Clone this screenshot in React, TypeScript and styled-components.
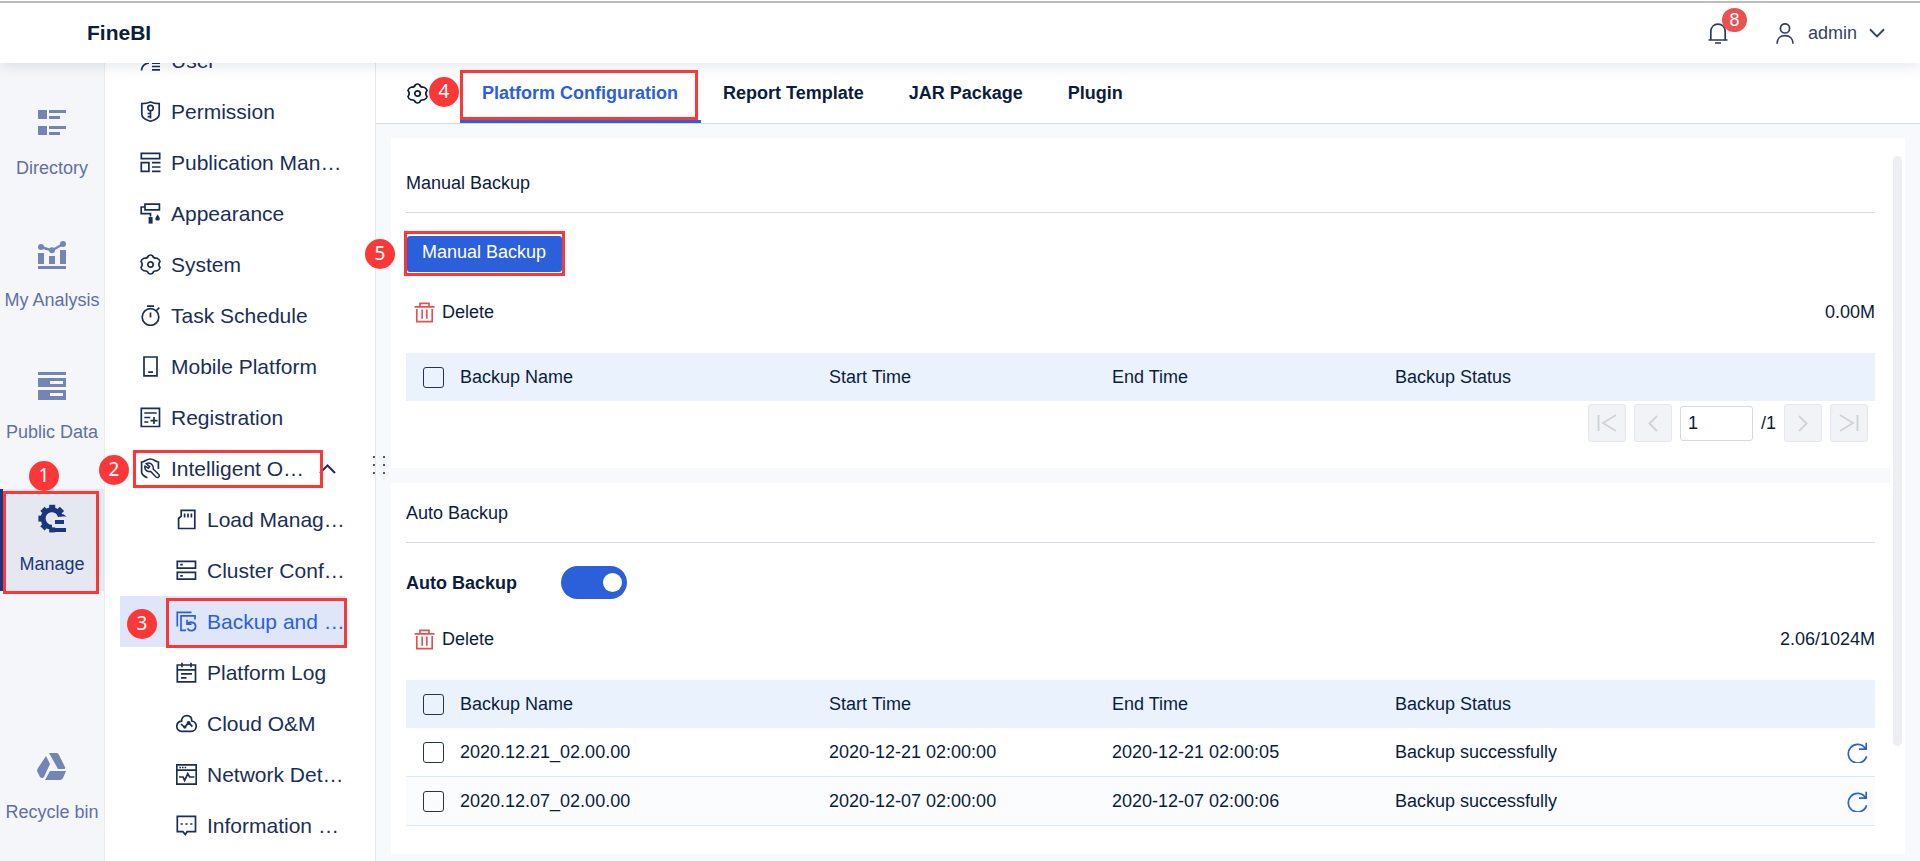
import React, { useState } from "react";
import styled, { createGlobalStyle, css } from "styled-components";

const color = {
  ink: "#0b1d3c",
  menuInk: "#1a2f57",
  blue: "#2b60da",
  rail: "#f4f6fa",
  railInk: "#5f70a5",
  railIcon: "#7385b5",
  navy: "#1b3680",
  line: "#d6d9e2",
  canvas: "#f8f9fd",
  marker: "#fb3838",
};

const GlobalStyle = createGlobalStyle`
  *, *::before, *::after { box-sizing: border-box; }
  body {
    margin: 0;
    background: ${color.canvas};
    color: ${color.ink};
    font-family: "Liberation Sans", Arial, sans-serif;
    font-size: 18px;
    line-height: 24px;
  }
  button, input { font: inherit; color: inherit; }
  a { color: inherit; text-decoration: none; }
`;

const Page = styled.div`
  position: relative;
  display: flex;
  flex-direction: column;
  min-height: 100vh;
`;

const Header = styled.header`
  position: relative;
  z-index: 2;
  display: flex;
  align-items: center;
  justify-content: space-between;
  height: 63px;
  padding: 3px 35px 0 87px;
  background: #fff;
  box-shadow: 0 2px 14px rgba(20, 35, 70, 0.12);

  &::before {
    content: "";
    position: absolute;
    top: 1px;
    left: 0;
    right: 0;
    height: 2px;
    background: #bcbebe;
  }
`;

const Brand = styled.h1`
  margin: 0;
  font-size: 21px;
`;

const HeaderTools = styled.div`
  display: flex;
  align-items: center;
  gap: 46px;
`;

const PlainButton = styled.button`
  display: flex;
  align-items: center;
  padding: 0;
  border: 0;
  background: none;
  cursor: pointer;
`;

const BellButton = styled(PlainButton)`
  position: relative;
  color: #2a3b5b;
`;

const Count = styled.span`
  position: absolute;
  top: -15px;
  left: 14px;
  width: 25px;
  height: 24px;
  border-radius: 12px;
  background: #e85252;
  color: #fff;
  text-align: center;
`;

const UserButton = styled(PlainButton)`
  color: #33435f;
  gap: 12px;
`;

const Body = styled.div`
  display: flex;
  flex: 1;
`;

const Rail = styled.nav`
  display: flex;
  flex-direction: column;
  gap: 30px;
  width: 105px;
  flex: none;
  padding: 30px 0 22px;
  background: ${color.rail};
  border-right: 1px solid #e9ecf1;
`;

const RailLink = styled.a<{ $active?: boolean; $last?: boolean }>`
  display: flex;
  flex-direction: column;
  align-items: center;
  height: 102px;
  padding-top: 15px;
  gap: 20px;
  color: ${color.railInk};
  white-space: nowrap;

  svg { color: ${color.railIcon}; }

  ${(p) => p.$last && css`margin-top: auto;`}
  ${(p) =>
    p.$active &&
    css`
      background: #e5e8f1;
      box-shadow: inset 3px 0 ${color.navy};
      color: ${color.navy};
      svg { color: ${color.navy}; }
    `}
`;

const Menu = styled.nav`
  width: 271px;
  flex: none;
  padding: 0 30px 0 15px;
  overflow: hidden;
  background: #fff;
  border-right: 1px solid #e6e8ee;
`;

const MenuList = styled.div`
  margin-top: -28px;
`;

const MenuLink = styled.a<{ $sub?: boolean; $active?: boolean }>`
  display: flex;
  align-items: center;
  gap: 10px;
  height: 51px;
  padding-left: ${(p) => (p.$sub ? 56 : 20)}px;
  font-size: 21px;
  white-space: nowrap;
  color: ${(p) => (p.$active ? color.blue : color.menuInk)};
  background: ${(p) => (p.$active ? "#e0e6fa" : "transparent")};
`;

const Caret = styled.svg`
  margin-left: auto;
  margin-right: 9px;
`;

const Main = styled.main`
  position: relative;
  display: flex;
  flex-direction: column;
  flex: 1;
  min-width: 0;
`;

const Handle = styled.svg`
  position: absolute;
  top: 392px;
  left: -4px;
`;

const TabBar = styled.div`
  display: flex;
  align-items: center;
  height: 61px;
  padding-left: 31px;
  background: #fff;
  border-bottom: 1px solid ${color.line};
`;

const GearButton = styled(PlainButton)`
  width: 53px;
`;

const Tab = styled.button<{ $active?: boolean }>`
  height: 60px;
  padding: 2px 23px 0 22px;
  border: 0;
  border-bottom: 3px solid ${(p) => (p.$active ? color.blue : "transparent")};
  background: none;
  font-weight: bold;
  color: ${(p) => (p.$active ? color.blue : color.ink)};
  cursor: pointer;
`;

const Canvas = styled.div`
  display: flex;
  flex: 1;
  padding: 14px 15px 7px;
`;

const Panel = styled.div`
  display: flex;
  flex: 1;
  min-width: 0;
  background: #fff;
`;

const Sections = styled.div`
  flex: 1;
  min-width: 0;
  padding-top: 15px;
`;

const ScrollTrack = styled.div`
  width: 15px;
  padding: 18px 3px;
`;

const ScrollThumb = styled.div`
  height: 590px;
  border-radius: 5px;
  background: #edeef2;
`;

const Section = styled.section`
  padding: 0 15px 26px;

  & + & { border-top: 15px solid ${color.canvas}; }
`;

const SectionTitle = styled.h2`
  height: 60px;
  margin: 0 0 23px;
  padding: 18px 0 17px;
  border-bottom: 1px solid ${color.line};
  font-size: 18px;
  font-weight: normal;
`;

const PrimaryButton = styled.button`
  display: block;
  height: 36px;
  margin-left: 1px;
  padding: 0 16px 4px 15px;
  border: 0;
  border-radius: 3px;
  background: ${color.blue};
  color: #fff;
  cursor: pointer;
`;

const SwitchRow = styled.label`
  display: flex;
  align-items: center;
  gap: 44px;
  height: 33px;
  font-weight: bold;
`;

const Switch = styled.input`
  appearance: none;
  width: 66px;
  height: 33px;
  margin: 0;
  padding: 7px 5px;
  border-radius: 17px;
  background: #b8c0d0;
  cursor: pointer;

  &::before {
    content: "";
    display: block;
    width: 19px;
    height: 19px;
    border-radius: 50%;
    background: #fff;
  }
  &:checked { background: ${color.blue}; }
  &:checked::before { margin-left: auto; }
`;

const Toolbar = styled.div`
  display: flex;
  align-items: center;
  justify-content: space-between;
  height: 40px;
  margin: 20px 0 21px;
`;

const DeleteButton = styled(PlainButton)`
  gap: 7px;
  padding-left: 8px;

  svg { color: #e35252; }
`;

const Table = styled.table`
  width: 100%;
  table-layout: fixed;
  border-collapse: separate;
  border-spacing: 0;
  text-align: left;

  th, td { padding: 0; font-weight: normal; }
  th { height: 48px; background: #eaf2fe; }
  td { height: 49px; border-bottom: 1px solid #dbe8fa; }
  tbody tr:nth-child(even) { background: #fbfcfe; }
`;

const CheckCol = styled.col`width: 54px;`;
const NameCol = styled.col`width: 369px;`;
const TimeCol = styled.col`width: 283px;`;

const Checkbox = styled.input`
  appearance: none;
  display: block;
  width: 21px;
  height: 21px;
  margin: 0 0 0 17px;
  border: 1px solid #26344f;
  border-radius: 3px;
  cursor: pointer;

  &:checked { background: ${color.blue}; }
`;

const StatusCell = styled.div`
  display: flex;
  align-items: center;
  justify-content: space-between;
  padding-right: 7px;

  svg { color: ${color.blue}; }
`;

const Pager = styled.div`
  display: flex;
  align-items: center;
  justify-content: flex-end;
  gap: 8px;
  padding: 3px 7px 0 0;
`;

const PageButton = styled.button`
  display: flex;
  align-items: center;
  justify-content: center;
  width: 38px;
  height: 38px;
  padding: 0;
  border: 1px solid #e5e7ec;
  border-radius: 3px;
  background: #f2f3f7;
  color: #d0d4db;
`;

const PageInput = styled.input`
  width: 73px;
  height: 35px;
  padding: 0 7px;
  border: 1px solid ${color.line};
  border-radius: 3px;
  background: #fff;
`;

/* Numbered walkthrough markers that lie over the page. */
const MarkerBox = styled.div<{ $x: number; $y: number; $w: number; $h: number }>`
  position: absolute;
  z-index: 3;
  left: ${(p) => p.$x}px;
  top: ${(p) => p.$y}px;
  width: ${(p) => p.$w}px;
  height: ${(p) => p.$h}px;
  border: 3px solid ${color.marker};
  pointer-events: none;
`;

const MarkerDot = styled.span<{ $x: number; $y: number }>`
  position: absolute;
  z-index: 4;
  left: ${(p) => p.$x}px;
  top: ${(p) => p.$y}px;
  width: 30px;
  height: 30px;
  border-radius: 50%;
  background: ${color.marker};
  color: #fff;
  font-family: "Noto Sans", sans-serif;
  font-size: 19px;
  line-height: 29px;
  text-align: center;
  pointer-events: none;
`;

const Outline = ({ size = 21, children }: { size?: number; children: React.ReactNode }) => (
  <svg width={size} height={size} viewBox="0 0 21 21" fill="none" stroke="currentColor" strokeWidth="1.7" aria-hidden="true">
    {children}
  </svg>
);

const Solid = ({ children }: { children: React.ReactNode }) => (
  <svg width="30" height="28" viewBox="0 0 30 28" fill="currentColor" overflow="visible" aria-hidden="true">
    {children}
  </svg>
);

const gear = (
  <>
    <path d="M8.6 1.6 Q10.5 0.4 12.4 1.6 Q13.6 4.6 17 4.2 Q19.4 5 20 7.4 Q17.6 10.5 20 13.6 Q19.4 16 17 16.8 Q13.6 16.4 12.4 19.4 Q10.5 20.6 8.6 19.4 Q7.4 16.4 4 16.8 Q1.6 16 1 13.6 Q3.4 10.5 1 7.4 Q1.6 5 4 4.2 Q7.4 4.6 8.6 1.6 Z" />
    <circle cx="10.5" cy="10.5" r="2.7" />
  </>
);

const icons = {
  user: (
    <>
      <circle cx="8.5" cy="6" r="4" />
      <path d="M1.5 20.5 C2 16 4 13.5 9 13 M12 13.2 h8 M12 16.5 h8 M12 19.8 h8" />
    </>
  ),
  permission: (
    <>
      <path d="M10.5 1 C7.5 2.3 4.8 2.6 1.8 2.6 V13 C1.8 17 6 19 10.5 20.2 C15 19 19.2 17 19.2 13 V2.6 C16.2 2.6 13.5 2.3 10.5 1 Z" />
      <circle cx="10.5" cy="7" r="2.7" />
      <path d="M10.5 9.7 V17.5 M10.5 12.5 H7.6 M10.5 15.6 H7.6" />
    </>
  ),
  publication: (
    <path d="M1.3 1.3 h18.4 v5.4 h-18.4 z M1.3 10.7 h7.6 v8.6 h-7.6 z M12 10.7 h8.5 M12 15 h8.5 M12 19.3 h8.5" />
  ),
  appearance: (
    <>
      <path d="M5 1.2 h14.4 v5.6 h-14.4 z M5 4 H1.2 V10.6 H10.5 V13.5" />
      <path d="M8.6 14 h4 v6.6 h-4 z" fill="currentColor" stroke="none" />
      <path d="M17.6 11.6 c-3.4 4.2 -2.6 6 0 6 s3.4 -1.8 0 -6 z" fill="currentColor" stroke="none" />
    </>
  ),
  system: gear,
  schedule: (
    <>
      <circle cx="10.5" cy="12" r="8.3" />
      <path d="M7 1.2 h7 M10.5 7.5 v5 M16.5 5.5 l2.8 -2.8" />
    </>
  ),
  mobile: <path d="M4 1 h13 v18.8 h-13 z M8.2 16.2 h4.8" />,
  registration: <path d="M1.3 1.3 h18.2 v18.2 h-18.2 z M4.3 6 h12.4 M4.3 10.5 h6 M4.3 15 h4 M10.5 13.6 h7 M14 10 v7" />,
  intelligent: (
    <>
      <path d="M18.4 11 V4 C15 3.6 14 1 10.2 1 C6.4 1 5.4 3.6 1.6 4 V14 C1.6 17 4.2 18.4 7.4 19.8" />
      <path d="M6.3 5.6 L9.6 8.6 L8.4 10.2 L5 8.2 C4 11.5 7 14.4 10.6 13.4 L16 19 C18 20.6 20.2 18.2 18.8 16.4 L13.2 11 C14 7 10 4 6.3 5.6 Z" strokeWidth="1.5" />
    </>
  ),
  load: <path d="M6 1.3 H18.8 V19.5 H2.6 V9.5 L5.2 7.2 V1.3 H7 M8.6 4.5 v4 M12 4.5 v4 M15.4 4.5 v4" />,
  cluster: <path d="M1.3 1.3 h18.2 v6.8 h-18.2 z M1.3 12.4 h18.2 v6.8 h-18.2 z M4.2 4.7 h2.6 M4.2 15.8 h2.6" />,
  backup: (
    <>
      <path d="M1.3 15.5 V1.3 H15.5" />
      <path d="M10 19.4 H5 V4.8 H19 V8.4" />
      <path d="M11 8.8 V13.2 H15.6 M11.4 13 C13 10.2 19.8 10.6 19.6 15.4 C19.4 20.4 13 20.8 11.4 17.4" />
    </>
  ),
  log: <path d="M1.3 3 h18.2 v16.8 h-18.2 z M1.3 7.8 h18.2 M6 0.8 v4.4 M15 0.8 v4.4 M5 11.8 h11 M5 15.8 h5.5" />,
  cloud: (
    <>
      <path d="M5.6 8.2 C5.6 4.8 7.8 2.6 10.8 2.6 C13.8 2.6 15.8 4.8 15.8 8 C18.6 8.6 20.2 10.8 20.2 13 C20.2 16.2 18 18.4 15 18.4 H5.8 C2.8 18.4 0.8 16.2 0.8 13.4 C0.8 10.8 2.6 8.6 5.6 8.2 Z" />
      <path d="M5 11.2 L8.8 14.4 L12.6 9.6 L16.4 13.6" />
      <circle cx="8.8" cy="14" r="1.6" fill="currentColor" stroke="none" />
      <circle cx="12.6" cy="10" r="2" fill="currentColor" stroke="none" />
    </>
  ),
  network: <path d="M0.8 0.8 h19.4 v19.4 h-19.4 z M0.8 6.2 h19.4 M3.4 3.5 h1.6 M6 3.5 h1.6 M8.6 3.5 h1.6 M3 13 h4 l1.6 3.4 l3.2 -6.8 l1.8 3.4 h4.8" />,
  information: <path d="M1.3 1.3 h18.2 v15.4 h-8.4 l-1.8 2.8 l-2.4 -2.8 h-5.6 z M4.6 9 h2.2 M9.4 9 h2.2 M14.2 9 h2.2" />,
};

type MenuEntry = { label: string; icon: keyof typeof icons; sub?: boolean; open?: boolean; active?: boolean };

const menu: MenuEntry[] = [
  { label: "User", icon: "user" },
  { label: "Permission", icon: "permission" },
  { label: "Publication Man…", icon: "publication" },
  { label: "Appearance", icon: "appearance" },
  { label: "System", icon: "system" },
  { label: "Task Schedule", icon: "schedule" },
  { label: "Mobile Platform", icon: "mobile" },
  { label: "Registration", icon: "registration" },
  { label: "Intelligent O…", icon: "intelligent", open: true },
  { label: "Load Manag…", icon: "load", sub: true },
  { label: "Cluster Conf…", icon: "cluster", sub: true },
  { label: "Backup and …", icon: "backup", sub: true, active: true },
  { label: "Platform Log", icon: "log", sub: true },
  { label: "Cloud O&M", icon: "cloud", sub: true },
  { label: "Network Det…", icon: "network", sub: true },
  { label: "Information …", icon: "information", sub: true },
];

const rail = [
  {
    label: "Directory",
    icon: <path d="M1 2h9v9H1zM1 18h9v9H1zM12 2h17v3H12zM12 8h11v3H12zM12 18h17v3H12zM12 24h11v3H12z" />,
  },
  {
    label: "My Analysis",
    icon: (
      <>
        <path d="M1 13h6v11H1zM12 16h6v8h-6zM23 10h6v14h-6zM1 26h28v3H1z" />
        <path d="M4 7 L15 10.5 L26 4" fill="none" stroke="currentColor" strokeWidth="2.4" />
        <circle cx="4" cy="7" r="3" />
        <circle cx="15" cy="10.2" r="3" />
        <circle cx="26" cy="4" r="3" />
      </>
    ),
  },
  {
    label: "Public Data",
    icon: <path fillRule="evenodd" d="M1 0h28v3H1zM1 6h28v9H1zM13 9v3h13V9zM1 18h28v10H1zM13 21v3h13v-3z" />,
  },
  {
    label: "Manage",
    active: true,
    icon: (
      <>
        <path d="M23.5 12.5 A8.8 8.8 0 1 0 15 23.3" fill="none" stroke="currentColor" strokeWidth="5" />
        <path d="M20 12.5 L26 10 L29.5 12.5 Z" />
        <g>
          {[90, 135, 180, 225, 270, 315].map((angle) => (
            <rect key={angle} x="24" y="11.6" width="5" height="6" transform={`rotate(${angle} 15.2 14.6)`} />
          ))}
        </g>
        <path d="M18 16h9v4h-9zM18 24h11v4H18z" />
      </>
    ),
  },
  {
    label: "Recycle bin",
    last: true,
    icon: <path d="M12 1h8q1 0 2 2l6 12q1 2-1 2h-6zM9 4l4 8-6 13q-2 2-4 0l-3-6q0-1 1-3zM13 19h16l-3 7q-1 2-3 2H8z" />,
  },
];

const tabs = ["Platform Configuration", "Report Template", "JAR Package", "Plugin"];

const backups = [
  { name: "2020.12.21_02.00.00", start: "2020-12-21 02:00:00", end: "2020-12-21 02:00:05" },
  { name: "2020.12.07_02.00.00", start: "2020-12-07 02:00:00", end: "2020-12-07 02:00:06" },
];

const DeleteBar = ({ usage }: { usage: string }) => (
  <Toolbar>
    <DeleteButton type="button">
      <Outline>
        <path d="M6 4.4 V1.4 H15 V4.4 M0.5 4.8 H20.5 M2.8 7 V19.6 H18.2 V7 M8.2 7.5 V16.8 M12.8 7.5 V16.8" />
      </Outline>
      Delete
    </DeleteButton>
    <span>{usage}</span>
  </Toolbar>
);

const BackupTable = ({ rows }: { rows: typeof backups }) => (
  <Table>
    <colgroup>
      <CheckCol />
      <NameCol />
      <TimeCol />
      <TimeCol />
      <col />
    </colgroup>
    <thead>
      <tr>
        <th><Checkbox type="checkbox" aria-label="Select all backups" /></th>
        <th>Backup Name</th>
        <th>Start Time</th>
        <th>End Time</th>
        <th>Backup Status</th>
      </tr>
    </thead>
    <tbody>
      {rows.map((row) => (
        <tr key={row.name}>
          <td><Checkbox type="checkbox" aria-label={`Select ${row.name}`} /></td>
          <td>{row.name}</td>
          <td>{row.start}</td>
          <td>{row.end}</td>
          <td>
            <StatusCell>
              Backup successfully
              <PlainButton type="button" aria-label={`Restore ${row.name}`}>
                <Outline>
                  <path d="M19.6 14.2 A9.3 9.3 0 1 1 18.4 6.6 M19.2 0.8 V7.2 H12" />
                </Outline>
              </PlainButton>
            </StatusCell>
          </td>
        </tr>
      ))}
    </tbody>
  </Table>
);

export default function App() {
  const [tab, setTab] = useState(tabs[0]);
  const [auto, setAuto] = useState(true);
  const [page, setPage] = useState("1");

  return (
    <Page>
      <GlobalStyle />
      <Header>
        <Brand>FineBI</Brand>
        <HeaderTools>
          <BellButton type="button" aria-label="Notifications">
            <Outline>
              <path d="M2.8 16.3 V9 C2.8 4 5.8 1.2 10 1.2 C14.2 1.2 17.2 4 17.2 9 V16.3 M0.5 17 H19.5 M7 20 h6" />
            </Outline>
            <Count>8</Count>
          </BellButton>
          <UserButton type="button">
            <Outline>
              <circle cx="10" cy="5.4" r="4.6" />
              <path d="M2 20.8 C2 15.6 5.2 12.6 10 12.6 C14.8 12.6 18 15.6 18 20.8" />
            </Outline>
            admin
            <svg width="16" height="10" viewBox="0 0 17 10" fill="none" stroke="currentColor" strokeWidth="2" aria-hidden="true">
              <path d="M1 1 L8.5 8.5 L16 1" />
            </svg>
          </UserButton>
        </HeaderTools>
      </Header>

      <Body>
        <Rail aria-label="Modules">
          {rail.map((item) => (
            <RailLink key={item.label} href="#" $active={item.active} $last={item.last}>
              <Solid>{item.icon}</Solid>
              {item.label}
            </RailLink>
          ))}
        </Rail>

        <Menu aria-label="Manage">
          <MenuList>
            {menu.map((item) => (
              <MenuLink key={item.label} href="#" $sub={item.sub} $active={item.active}>
                <Outline>{icons[item.icon]}</Outline>
                {item.label}
                {item.open && (
                  <Caret width="17" height="10" viewBox="0 0 17 10" fill="none" stroke="currentColor" strokeWidth="2" aria-hidden="true">
                    <path d="M1 9 L8.5 1.5 L16 9" />
                  </Caret>
                )}
              </MenuLink>
            ))}
          </MenuList>
        </Menu>

        <Main>
          <TabBar>
            <GearButton type="button" aria-label="Settings">
              <Outline>{gear}</Outline>
            </GearButton>
            {tabs.map((name) => (
              <Tab key={name} type="button" $active={name === tab} onClick={() => setTab(name)}>
                {name}
              </Tab>
            ))}
          </TabBar>
          <Canvas>
            <Panel>
              <Sections>
                <Section>
                  <SectionTitle>Manual Backup</SectionTitle>
                  <PrimaryButton type="button">Manual Backup</PrimaryButton>
                  <DeleteBar usage="0.00M" />
                  <BackupTable rows={[]} />
                  <Pager>
                    <PageButton type="button" aria-label="First page">
                      <svg width="20" height="18" viewBox="0 0 20 18" fill="none" stroke="currentColor" strokeWidth="2">
                        <path d="M1.5 1 V17 M19 1 L6 9 L19 17" />
                      </svg>
                    </PageButton>
                    <PageButton type="button" aria-label="Previous page">
                      <svg width="10" height="17" viewBox="0 0 10 17" fill="none" stroke="currentColor" strokeWidth="2">
                        <path d="M9 1 L1.5 8.5 L9 16" />
                      </svg>
                    </PageButton>
                    <PageInput aria-label="Page" value={page} onChange={(e) => setPage(e.target.value)} />
                    <span>/1</span>
                    <PageButton type="button" aria-label="Next page">
                      <svg width="10" height="17" viewBox="0 0 10 17" fill="none" stroke="currentColor" strokeWidth="2">
                        <path d="M1 1 L8.5 8.5 L1 16" />
                      </svg>
                    </PageButton>
                    <PageButton type="button" aria-label="Last page">
                      <svg width="20" height="18" viewBox="0 0 20 18" fill="none" stroke="currentColor" strokeWidth="2">
                        <path d="M18.5 1 V17 M1 1 L14 9 L1 17" />
                      </svg>
                    </PageButton>
                  </Pager>
                </Section>

                <Section>
                  <SectionTitle>Auto Backup</SectionTitle>
                  <SwitchRow>
                    Auto Backup
                    <Switch type="checkbox" role="switch" checked={auto} onChange={(e) => setAuto(e.target.checked)} />
                  </SwitchRow>
                  <DeleteBar usage="2.06/1024M" />
                  <BackupTable rows={backups} />
                </Section>
              </Sections>
              <ScrollTrack>
                <ScrollThumb />
              </ScrollTrack>
            </Panel>
          </Canvas>
          <Handle width="16" height="22" viewBox="0 0 16 22" fill="#4d5c7c" aria-hidden="true">
            <path d="M1 1h2v2H1zM11 1h2v2h-2zM1 9h2v2H1zM11 9h2v2h-2zM1 17h2v2H1zM11 17h2v2h-2z" />
          </Handle>
        </Main>
      </Body>

      <MarkerBox $x={3} $y={491} $w={96} $h={103} />
      <MarkerBox $x={133} $y={450} $w={190} $h={38} />
      <MarkerBox $x={166} $y={598} $w={181} $h={50} />
      <MarkerBox $x={460} $y={70} $w={238} $h={50} />
      <MarkerBox $x={404} $y={231} $w={161} $h={45} />
      <MarkerDot $x={29} $y={461}>1</MarkerDot>
      <MarkerDot $x={99} $y={455}>2</MarkerDot>
      <MarkerDot $x={127} $y={609}>3</MarkerDot>
      <MarkerDot $x={429} $y={77}>4</MarkerDot>
      <MarkerDot $x={365} $y={239}>5</MarkerDot>
    </Page>
  );
}
